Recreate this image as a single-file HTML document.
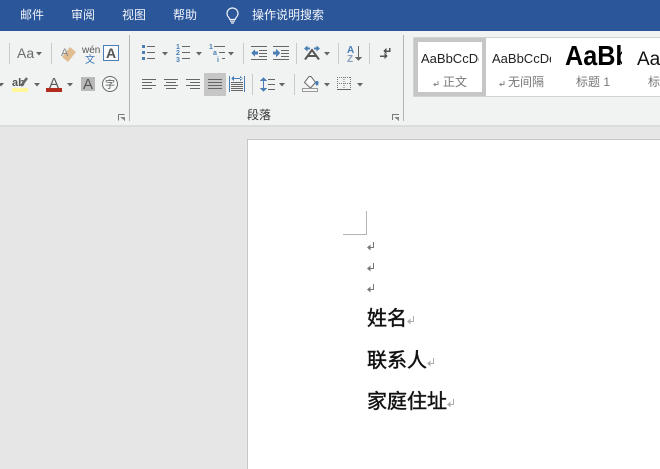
<!DOCTYPE html>
<html lang="zh"><head><meta charset="utf-8"><style>
html,body{margin:0;padding:0;width:660px;height:469px;overflow:hidden;background:#e6e6e6}
svg{position:absolute;left:0;top:0;display:block}
text{font-family:"Liberation Sans","Noto Sans CJK SC",sans-serif}
</style></head><body>
<svg width="660" height="469" viewBox="0 0 660 469" shape-rendering="crispEdges">
<defs>
<path id="dd" d="M0 0h6l-3 3.500z" fill="#646464" shape-rendering="geometricPrecision"/>
<g id="ret"><path d="M6.500 0v5.500H3" fill="none" stroke="#777"/><path d="M0 5.500l3.500-3v6z" fill="#777" shape-rendering="geometricPrecision"/></g>
<g id="rets"><path d="M5 0v3.500H2.500" fill="none" stroke="#888"/><path d="M0 3.500l2.500-2v4z" fill="#888" shape-rendering="geometricPrecision"/></g>
</defs>
<rect width="660" height="31" fill="#2b579a"/>
<rect y="31" width="660" height="94" fill="#f1f3f3"/>
<rect y="125" width="660" height="2" fill="#dcdcdc"/>
<g fill="#f0f3f8" font-size="12">
<text x="20" y="19">邮件</text><text x="71" y="19">审阅</text><text x="122" y="19">视图</text><text x="173" y="19">帮助</text><text x="252" y="19">操作说明搜索</text>
</g>
<g shape-rendering="geometricPrecision" fill="none" stroke="#f0f3f8" stroke-width="1.200">
<path d="M229.800 19.500c0-2-2.800-2.500-2.800-6a5.500 5.500 0 0 1 11 0c0 3.500-2.800 4-2.800 6z"/><path d="M230 21.200h5M231 23h3"/>
</g>
<!-- separators -->
<g fill="#c8caca">
<rect x="9" y="43" width="1" height="21"/><rect x="51" y="43" width="1" height="21"/>
<rect x="243" y="43" width="1" height="21"/><rect x="296" y="43" width="1" height="21"/><rect x="338" y="43" width="1" height="21"/><rect x="369" y="43" width="1" height="21"/>
<rect x="252" y="74" width="1" height="21"/><rect x="294" y="74" width="1" height="21"/>
</g>
<g fill="#b4b6b6"><rect x="129" y="35" width="1" height="86"/><rect x="403" y="35" width="1" height="86"/></g>
<!-- font group -->
<text x="17" y="58" font-size="14" fill="#6a6a6a">Aa</text>
<use href="#dd" x="36" y="52"/>
<path shape-rendering="geometricPrecision" d="M62 57l8-10 6 5-8 10z" fill="#e3bd92"/>
<text x="61" y="56" font-size="11" fill="#888">A</text>
<text x="82" y="53" font-size="10" fill="#555">wén</text>
<text x="85" y="63" font-size="10" fill="#3f78b8">文</text>
<rect x="103.500" y="45.500" width="15" height="15" fill="#fafbfb" stroke="#4a7eb5"/>
<text x="106" y="58" font-size="14" fill="#555" font-weight="bold">A</text>
<use href="#dd" x="-2" y="83"/>
<text x="12" y="86" font-size="11" fill="#555" font-weight="bold">ab</text>
<path shape-rendering="geometricPrecision" d="M21 86l6-8" stroke="#666" stroke-width="2.500"/>
<rect x="12" y="88" width="16" height="4" fill="#fff799"/>
<use href="#dd" x="34" y="83"/>
<text x="49" y="88" font-size="15" fill="#5a5a5a">A</text>
<rect x="46" y="88" width="16" height="4" fill="#b22a1e"/>
<use href="#dd" x="67" y="83"/>
<rect x="81" y="77" width="14" height="14" fill="#b9b9b9"/>
<text x="83" y="89" font-size="15" fill="#555">A</text>
<circle shape-rendering="geometricPrecision" cx="110" cy="84" r="7.500" fill="#f6f7f7" stroke="#666"/>
<text x="105" y="88" font-size="10" fill="#555">字</text>
<g fill="none" stroke="#777"><path d="M118.500 114.500h6M118.500 114.500v6"/></g><path d="M120 117l5 4v-4z" fill="#888"/>
<path d="M393 114.500h6" stroke="#777"/><path d="M392.500 114v6" stroke="#777"/><path d="M394 117l5 4v-4z" fill="#888"/>
<!-- bullets -->
<g fill="#4a7eb5"><rect x="142" y="45" width="3" height="3"/><rect x="142" y="51" width="3" height="3"/><rect x="142" y="57" width="3" height="3"/></g>
<g fill="#666"><rect x="147" y="46" width="8" height="1"/><rect x="147" y="52" width="8" height="1"/><rect x="147" y="58" width="8" height="1"/></g>
<use href="#dd" x="162" y="52"/>
<g fill="#4a7eb5" font-size="7" font-weight="bold"><text x="176" y="49">1</text><text x="176" y="55">2</text><text x="176" y="62">3</text></g>
<g fill="#666"><rect x="182" y="46" width="8" height="1"/><rect x="182" y="52" width="8" height="1"/><rect x="182" y="58" width="8" height="1"/></g>
<use href="#dd" x="196" y="52"/>
<g fill="#4a7eb5" font-size="7" font-weight="bold"><text x="209" y="49">1</text><text x="213" y="55">a</text><text x="217" y="62">i</text></g>
<g fill="#666"><rect x="214" y="46" width="11" height="1"/><rect x="219" y="52" width="6" height="1"/><rect x="222" y="58" width="3" height="1"/></g>
<use href="#dd" x="228" y="52"/>
<!-- indent -->
<g fill="#666"><path d="M251 46h16v1h-16zM259 50h8v1h-8zM259 53h8v1h-8zM259 56h8v1h-8zM251 59h16v1h-16z"/>
<path d="M273 46h16v1h-16zM281 50h8v1h-8zM281 53h8v1h-8zM281 56h8v1h-8zM273 59h16v1h-16z"/></g>
<path d="M251 53l4-4v2.500h3v3h-3v2.500z" fill="#4a7eb5"/><path d="M280 53l-4-4v2.500h-3v3h3v2.500z" fill="#4a7eb5"/>
<!-- char spacing -->
<g shape-rendering="geometricPrecision">
<path d="M305 59.500l7-9.500 7 9.500M308 56h8" fill="none" stroke="#555" stroke-width="2"/>
<path d="M304 48.500l3.500-3v2h2.500v2h-2.500v2zM320 48.500l-3.500-3v2h-2.500v2h2.500v2z" fill="#4a7eb5"/>
</g>
<use href="#dd" x="324" y="52"/>
<!-- sort -->
<text x="347" y="53" font-size="10" fill="#4a7eb5" font-weight="bold">A</text>
<text x="347" y="62" font-size="10" fill="#8a9dbb" font-weight="bold">Z</text>
<path d="M358.500 46v14" stroke="#666"/><path d="M355 57h7l-3.500 4z" fill="#666"/>
<!-- show marks -->
<path d="M389.500 48v3h-5" fill="none" stroke="#555" stroke-width="1.500"/><path d="M383 51l3.500-3v6z" fill="#555"/><path d="M380 56h5" stroke="#555" stroke-width="1.500"/><path d="M388 56l-3.500-3v6z" fill="#555"/>
<!-- align -->
<g fill="#666"><path d="M142 79h14v1h-14zM142 82h10v1h-10zM142 85h14v1h-14zM142 88h10v1h-10z"/>
<path d="M164 79h14v1h-14zM166 82h10v1h-10zM164 85h14v1h-14zM166 88h10v1h-10z"/>
<path d="M186 79h14v1h-14zM190 82h10v1h-10zM186 85h14v1h-14zM190 88h10v1h-10z"/></g>
<rect x="204" y="73" width="22" height="23" fill="#c6c6c6"/>
<g fill="#646464"><path d="M208 79h14v1h-14zM208 82h14v1h-14zM208 85h14v1h-14zM208 88h14v1h-14z"/></g>
<g fill="#4a7eb5"><rect x="229" y="76" width="1" height="16"/><rect x="244" y="76" width="1" height="16"/><path d="M232 78h10v1h-10zM231 78.500l3-2.500v5zM243 78.500l-3-2.500v5z"/></g>
<g fill="#666"><path d="M231 82h12v1h-12zM231 84h12v1h-12zM231 86h12v1h-12zM231 88h12v1h-12zM231 90h12v1h-12z"/></g>
<!-- line spacing -->
<g fill="#4a7eb5"><rect x="263" y="78" width="1" height="13"/><path d="M260 81l3.500-4 3.500 4zM260 88l3.500 4 3.500-4z"/></g>
<g fill="#666"><path d="M268 79h7v1h-7zM268 84h7v1h-7zM268 89h7v1h-7z"/></g>
<use href="#dd" x="279" y="83"/>
<!-- shading -->
<path shape-rendering="geometricPrecision" d="M309 76.500h2l4.500 6-5 5.500-6-5.500z" fill="#fafafa" stroke="#666"/><path d="M315 82c2-2 4-1 3.500 1.500s-1.500 2-2.500 2z" fill="#4a7eb5"/>
<rect x="302.500" y="88.500" width="15" height="3" fill="#f5f5f5" stroke="#999"/>
<use href="#dd" x="324" y="83"/>
<!-- borders -->
<path d="M337 77.500h14M337 83.500h14M337.500 77v12M344 77v12M350.500 77v12" fill="none" stroke="#777" stroke-dasharray="1 1"/>
<rect x="337" y="89" width="14" height="1" fill="#666"/>
<use href="#dd" x="357" y="83"/>
<text x="247" y="119" font-size="12" fill="#303030">段落</text>
<!-- styles -->
<rect x="413.500" y="37.500" width="247" height="59" fill="#fff" stroke="#d2d2d2"/>
<rect x="416" y="40" width="68" height="54" fill="#fff" stroke="#c6c6c6" stroke-width="4"/>
<svg x="421" y="48" width="58" height="22" overflow="hidden"><text x="0" y="15" font-size="13" fill="#222">AaBbCcDd</text></svg>
<svg x="492" y="48" width="59" height="22" overflow="hidden"><text x="0" y="15" font-size="13" fill="#222">AaBbCcDd</text></svg>
<svg x="565" y="40" width="57" height="34" overflow="hidden"><text transform="scale(.9 1)" x="0" y="25" font-size="28" font-weight="bold" fill="#000">AaBbC</text></svg>
<svg x="637" y="44" width="23" height="30" overflow="hidden"><text x="0" y="21" font-size="19" fill="#111">AaB</text></svg>
<g fill="#777" font-size="12"><text x="443" y="86">正文</text><text x="508" y="86">无间隔</text><text x="576" y="86">标题 1</text><text x="648" y="86">标题</text></g>
<use href="#rets" x="433" y="81"/>
<use href="#rets" x="499" y="81"/>
<!-- page -->
<rect x="247.500" y="139.500" width="420" height="340" fill="#fff" stroke="#c6c6c6"/>
<path d="M366.500 211v23.500H343" fill="none" stroke="#b4b4b4"/>
<use href="#ret" x="367" y="242"/><use href="#ret" x="367" y="263"/><use href="#ret" x="367" y="284"/>
<g font-size="20" fill="#111" stroke="#111" stroke-width=".45" shape-rendering="geometricPrecision"><text x="367" y="325">姓名</text><text x="367" y="367">联系人</text><text x="367" y="408">家庭住址</text></g>
<use href="#ret" x="407" y="316" opacity=".6"/><use href="#ret" x="427" y="358" opacity=".6"/><use href="#ret" x="447" y="399" opacity=".6"/>
</svg>
</body></html>
